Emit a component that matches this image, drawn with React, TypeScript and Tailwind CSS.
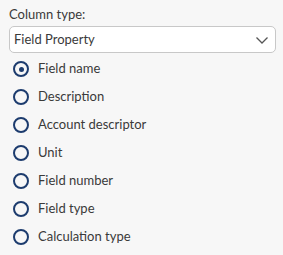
import React from "react";

const options = [
  "Field name",
  "Description",
  "Account descriptor",
  "Unit",
  "Field number",
  "Field type",
  "Calculation type",
];

export default function App() {
  return (
    <div
      className="w-[283px] h-[255px] bg-[#f7f7f7] text-[#3a3a3a] px-[9px] pt-[4px]"
      style={{ fontFamily: "Lato, 'Open Sans', sans-serif" }}
    >
      <div className="text-[13px] leading-[20px] h-[22px]">Column type:</div>
      <div className="flex items-center justify-between h-[27px] w-[267px] border border-[#c8c8c8] rounded-[5px] bg-white pl-[4px] pr-[6px]">
        <span className="text-[13px]">Field Property</span>
        <svg width="14" height="14" viewBox="0 0 14 14" fill="none">
          <path d="M1.5 4.5 L7 10 L12.5 4.5" stroke="#555" strokeWidth="1.3" />
        </svg>
      </div>
      <div className="flex flex-col pt-[2px]">
        {options.map((o, i) => (
          <label key={o} className="flex items-center h-[28px] pl-[4px] gap-[10px]">
            <span className="w-[16px] h-[16px] rounded-full border-[2.5px] border-[#1d3c6e] flex items-center justify-center">
              {i === 0 && <span className="w-[5px] h-[5px] rounded-full bg-[#1d3c6e]" />}
            </span>
            <span className="text-[13px] -ml-[1px]">{o}</span>
          </label>
        ))}
      </div>
    </div>
  );
}
